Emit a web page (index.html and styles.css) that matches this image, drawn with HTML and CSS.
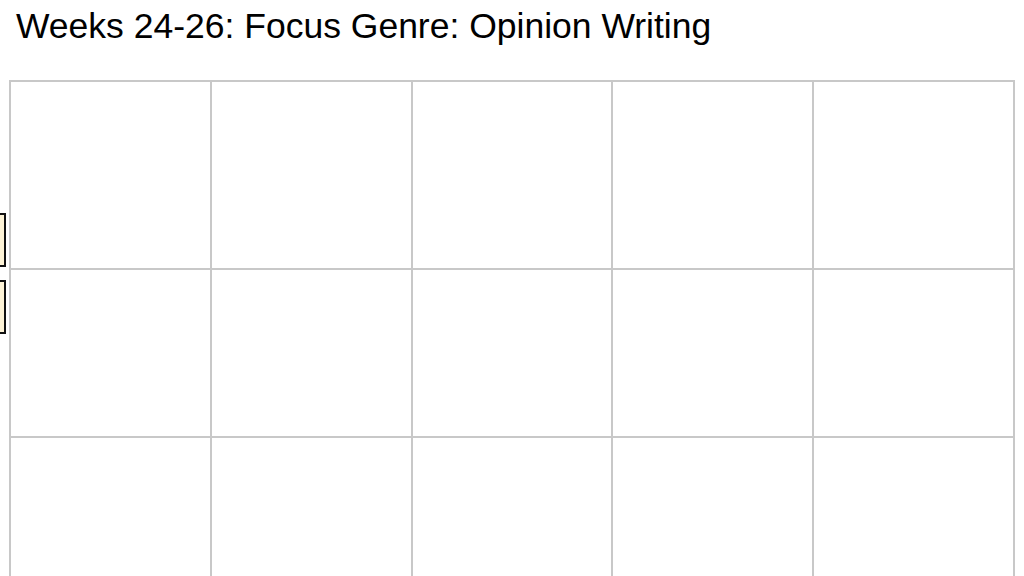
FILE: index.html
```html
<!DOCTYPE html>
<html>
<head>
<meta charset="utf-8">
<link rel="stylesheet" href="styles.css">
</head>
<body>
<h1 class="title">Weeks 24-26: Focus Genre: Opinion Writing</h1>
<div class="grid">
  <div class="cell"></div><div class="cell"></div><div class="cell"></div><div class="cell"></div><div class="cell"></div>
  <div class="cell"></div><div class="cell"></div><div class="cell"></div><div class="cell"></div><div class="cell"></div>
  <div class="cell"></div><div class="cell"></div><div class="cell"></div><div class="cell"></div><div class="cell"></div>
</div>
<div class="tab tab-one"></div>
<div class="tab tab-two"></div>
</body>
</html>
```
FILE: styles.css
```css
html, body {
  margin: 0;
  padding: 0;
  background: #ffffff;
  overflow: hidden;
  width: 1024px;
  height: 576px;
}
body {
  position: relative;
  font-family: "Liberation Sans", Arial, sans-serif;
}
.title {
  margin: 6px 0 0 16px;
  font-size: 35.5px;
  font-weight: normal;
  line-height: 41px;
  color: #000;
  height: 74px;
}
.grid {
  margin-left: 9px;
  width: 1006px;
  display: grid;
  grid-template-columns: repeat(5, 1fr);
  grid-template-rows: 188px 168px 140px;
  border-left: 2px solid #c8c8c8;
  border-top: 2px solid #c8c8c8;
  box-sizing: border-box;
}
.cell {
  border-right: 2px solid #c8c8c8;
  border-bottom: 2px solid #c8c8c8;
}
.grid .cell:nth-child(n+11) {
  border-bottom: none;
}
.tab {
  position: absolute;
  left: -6px;
  width: 8px;
  background: #fdf3d6;
  border: 2px solid #111;
}
.tab-one {
  top: 213px;
  height: 50px;
}
.tab-two {
  top: 280px;
  height: 50px;
}
```
